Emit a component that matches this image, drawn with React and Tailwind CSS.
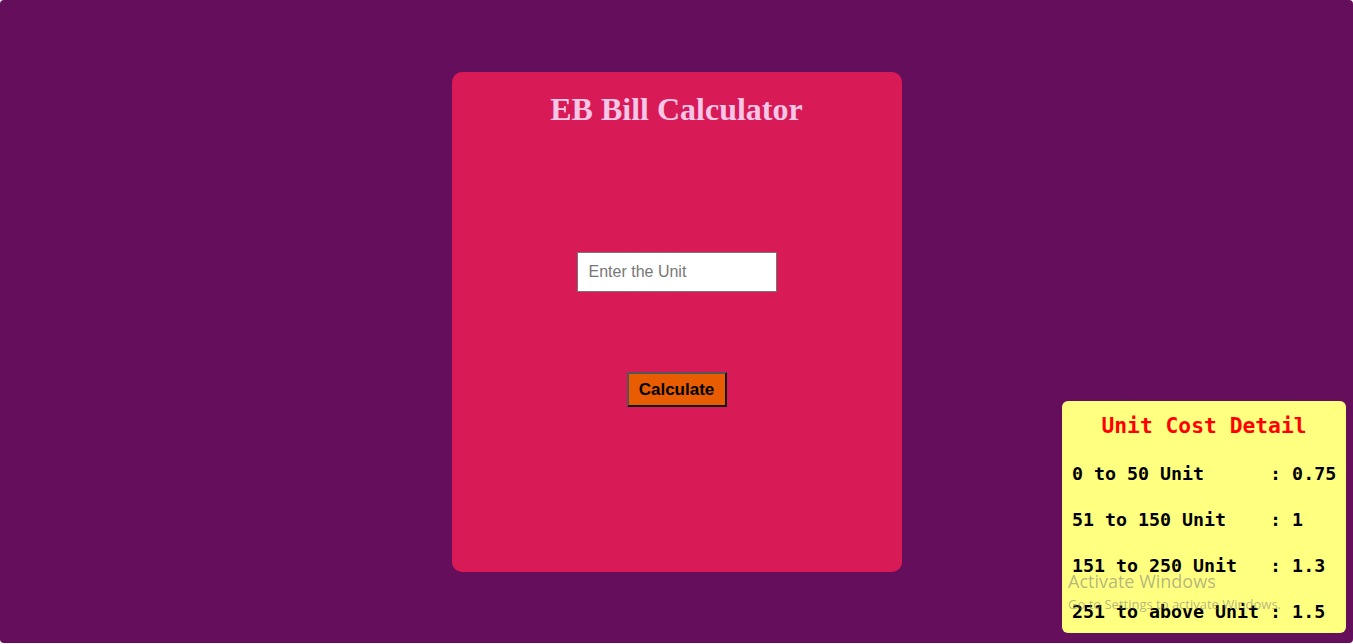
export default function App() {
  const rows = [
    "0 to 50 Unit      : 0.75",
    "51 to 150 Unit    : 1",
    "151 to 250 Unit   : 1.3",
    "251 to above Unit : 1.5",
  ];
  return (
    <div className="w-[1353px] h-[644px] bg-white">
      <div className="relative w-[1353px] h-[643px] bg-[#650e5c] rounded-[4px] flex justify-center pt-[72px]">
        <div className="w-[450px] h-[500px] bg-[#d81a56] rounded-[10px] flex flex-col items-center pt-[19px]">
          <h1
            className="text-[32px] leading-[37px] font-bold text-[#f6c6e6]"
            style={{ fontFamily: '"Liberation Serif", "Times New Roman", serif' }}
          >
            EB Bill Calculator
          </h1>
          <input
            type="text"
            placeholder="Enter the Unit"
            className="mt-[124px] w-[200px] h-[40px] bg-white border border-[#767676] px-[11px] text-[16px] text-black placeholder:text-[#777777] outline-none"
            style={{ fontFamily: '"Liberation Sans", Arial, sans-serif' }}
          />
          <button
            className="mt-[80px] w-[100px] h-[35px] bg-[#e85c02] border-2 border-t-[#555555] border-l-[#555555] border-r-[#111111] border-b-[#111111] text-[17px] font-bold text-black leading-none"
            style={{ fontFamily: '"Liberation Sans", Arial, sans-serif' }}
          >
            Calculate
          </button>
        </div>

        <div
          className="absolute right-[7px] bottom-[10px] w-[284px] h-[232px] bg-[#ffff80] rounded-[6px] pt-[12px] px-[10px]"
          style={{ fontFamily: '"DejaVu Sans Mono", "Liberation Mono", monospace' }}
        >
          <div className="text-center text-[21.3px] leading-[26px] font-bold text-[#ff0000]">
            Unit Cost Detail
          </div>
          <div className="mt-[24px] flex flex-col gap-[24px]">
            {rows.map((r) => (
              <div key={r} className="whitespace-pre text-[18.3px] leading-[22px] font-bold text-black">
                {r}
              </div>
            ))}
          </div>
        </div>

        <div
          className="absolute left-[1068px] top-[570px] pointer-events-none text-[rgba(120,120,120,0.55)]"
          style={{ fontFamily: '"Open Sans", "Noto Sans", sans-serif' }}
        >
          <div className="text-[18px] leading-[22px]">Activate Windows</div>
          <div className="text-[13px] leading-[18px] mt-[3px]">Go to Settings to activate Windows.</div>
        </div>
      </div>
    </div>
  );
}
